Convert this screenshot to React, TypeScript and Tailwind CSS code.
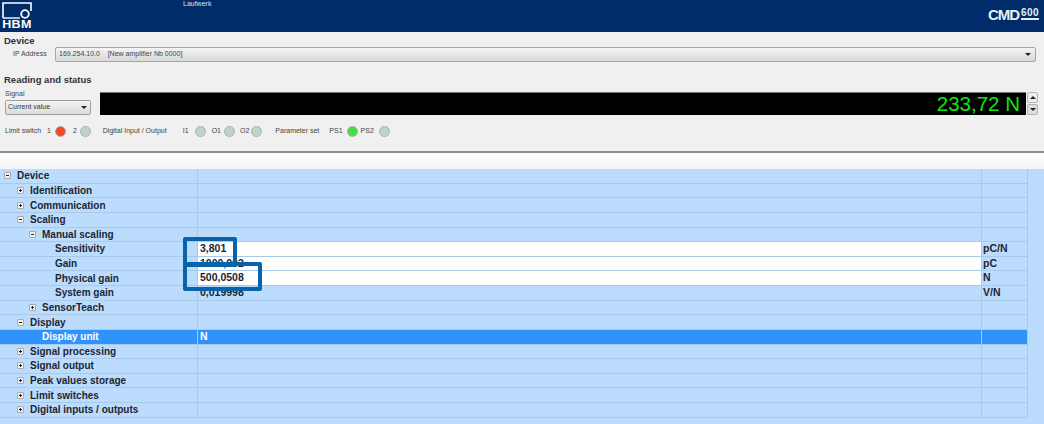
import React from "react";

const rows: { label: string; depth: number; icon?: "plus" | "minus"; value?: string; unit?: string; white?: boolean; selected?: boolean }[] = [
  { label: "Device", depth: 0, icon: "minus" },
  { label: "Identification", depth: 1, icon: "plus" },
  { label: "Communication", depth: 1, icon: "plus" },
  { label: "Scaling", depth: 1, icon: "minus" },
  { label: "Manual scaling", depth: 2, icon: "minus" },
  { label: "Sensitivity", depth: 3, value: "3,801", unit: "pC/N", white: true },
  { label: "Gain", depth: 3, value: "1000,002", unit: "pC", white: true },
  { label: "Physical gain", depth: 3, value: "500,0508", unit: "N", white: true },
  { label: "System gain", depth: 3, value: "0,019998", unit: "V/N" },
  { label: "SensorTeach", depth: 2, icon: "plus" },
  { label: "Display", depth: 1, icon: "minus" },
  { label: "Display unit", depth: 4, value: "N", selected: true },
  { label: "Signal processing", depth: 1, icon: "plus" },
  { label: "Signal output", depth: 1, icon: "plus" },
  { label: "Peak values storage", depth: 1, icon: "plus" },
  { label: "Limit switches", depth: 1, icon: "plus" },
  { label: "Digital inputs / outputs", depth: 1, icon: "plus" },
];

const indent = ["w-[4px]", "w-[17px]", "w-[29px]", "w-[55px]", "w-[42px]"];

const Expander = ({ type }: { type: "plus" | "minus" }) => (
  <span className="relative mr-[6px] h-[7px] w-[7px] shrink-0 rounded-[1px] border border-[#a9a9a9] bg-[#f2f2f2]">
    <span className="absolute left-[1px] top-[2px] h-px w-[3px] bg-[#222]" />
    {type === "plus" && <span className="absolute left-[2px] top-[1px] h-[3px] w-px bg-[#222]" />}
  </span>
);

const Led = ({ color }: { color: string }) => (
  <span className={`h-[11px] w-[11px] rounded-full border border-[#a8b4b2] ${color}`} />
);

const Logo = () => (
  <div className="flex w-[30px] flex-col">
    <svg width="30" height="17" viewBox="0 0 30 17">
      <path d="M1 16 V1 H29 V9" fill="none" stroke="#fff" strokeWidth="1.6" />
      <path d="M1 16 H18" fill="none" stroke="#fff" strokeWidth="1.4" />
      <circle cx="23" cy="12" r="3.8" fill="none" stroke="#fff" strokeWidth="1.8" />
    </svg>
    <span className="mt-[2px] text-center text-[10px] font-black leading-[8px] tracking-[0.3px] text-white [transform:scaleX(1.25)]">HBM</span>
  </div>
);

export default function App() {
  return (
    <div className="relative h-[424px] w-[1044px] overflow-hidden bg-[#bcdcfe] font-['Liberation_Sans',Arial,sans-serif] text-[#222]">
      <header className="flex h-[32px] items-start justify-between bg-[#012c69] pl-[2px] pr-[5px] pt-[2px]">
        <Logo />
        <span className="absolute left-[183px] top-0 text-[7px] leading-[8px] text-[#d7e0ee]">Laufwerk</span>
        <div className="mt-[5px] flex items-start font-bold leading-none text-[#e8eef5]">
          <span className="text-[15px] tracking-[-1px]">CMD</span>
          <span className="ml-[2px] border-b-2 border-[#e8eef5] text-[10px] leading-[11px] tracking-[0.4px]">600</span>
        </div>
      </header>

      <section className="h-[121px] border-b-2 border-[#8e8e8e] bg-[#f0f0f0] px-[4px] pt-[3px]">
        <h2 className="text-[9.5px] font-bold leading-[12px] text-[#333]">Device</h2>
        <div className="flex items-center">
          <span className="ml-[9px] w-[42px] text-[7px] text-[#444]">IP Address</span>
          <div className="flex h-[15px] w-[981px] items-center justify-between rounded-[2px] border border-[#a6a6a6] bg-gradient-to-b from-[#f4f4f4] to-[#d8d8d8] pl-[3px] pr-[4px] text-[7px] text-[#444]">
            <span className="whitespace-pre">169.254.10.0    [New amplifier Nb 0000]</span>
            <span className="h-0 w-0 border-x-[3px] border-t-[3px] border-x-transparent border-t-[#222]" />
          </div>
        </div>

        <h2 className="mt-[12px] text-[9.5px] font-bold leading-[12px] text-[#333]">Reading and status</h2>
        <div className="mt-[3px] flex items-end">
          <div className="ml-[1px] w-[86px]">
            <div className="text-[7px] leading-[10px] text-[#444]">Signal</div>
            <div className="mt-[1px] flex h-[15px] items-center justify-between rounded-[2px] border border-[#9e9e9e] bg-gradient-to-b from-[#f4f4f4] to-[#dcdcdc] pl-[2px] pr-[3px] text-[7px] text-[#333]">
              Current value
              <span className="h-0 w-0 border-x-[3px] border-t-[3px] border-x-transparent border-t-[#222]" />
            </div>
          </div>
          <div className="ml-[9px] flex h-[23px] w-[926px] items-center justify-end border-t border-[#777] bg-black pr-[6px] text-[20.5px] leading-none text-[#0fe60f]">233,72 N</div>
          <div className="ml-[1px] flex flex-col gap-px">
            <span className="flex h-[11px] w-[11px] items-center justify-center rounded-[2px] border border-[#b5b5b5] bg-[#ececec]"><span className="h-0 w-0 border-x-[3px] border-b-[3px] border-x-transparent border-b-[#222]" /></span>
            <span className="flex h-[11px] w-[11px] items-center justify-center rounded-[2px] border border-[#b5b5b5] bg-[#dedede]"><span className="h-0 w-0 border-x-[3px] border-t-[3px] border-x-transparent border-t-[#222]" /></span>
          </div>
        </div>
        <div className="mt-[10px] flex h-[12px] items-center text-[7px] text-[#444]">
          <span className="ml-[1px] w-[42px]">Limit switch</span>
          <span className="mr-[4px]">1</span>
          <Led color="bg-[#f3491c]" />
          <span className="ml-[7px] mr-[3px]">2</span>
          <Led color="bg-[#bfd2ce]" />
          <span className="ml-[12px] w-[72px]">Digital Input / Output</span>
          <span className="ml-[8px] mr-[6px]">I1</span>
          <Led color="bg-[#bfd2ce]" />
          <span className="ml-[6px] mr-[3px]">O1</span>
          <Led color="bg-[#bfd2ce]" />
          <span className="ml-[5px] mr-[2px]">O2</span>
          <Led color="bg-[#bfd2ce]" />
          <span className="ml-[13px] w-[53px]">Parameter set</span>
          <span className="ml-[1px] mr-[4px]">PS1</span>
          <Led color="bg-[#3fe03f]" />
          <span className="ml-[3px] mr-[5px]">PS2</span>
          <Led color="bg-[#bfd2ce]" />
        </div>
      </section>

      <div className="h-[16px] bg-gradient-to-b from-white to-[#f4f4f4]" />

      <div className="relative w-[1028px]">
        {rows.map((row) => (
          <div
            key={row.label}
            className={`flex h-[14.625px] items-center border-b border-[#a9c9ea] text-[10px] font-bold ${row.selected ? "bg-[#2f93fb] text-white" : "text-[#1c2530]"}`}
          >
            <div className="flex w-[197px] shrink-0 items-center">
              <span className={`shrink-0 ${indent[row.depth]}`} />
              {row.icon && <Expander type={row.icon} />}
              <span className="whitespace-nowrap">{row.label}</span>
            </div>
            <div className={`flex h-full w-[784px] shrink-0 items-center border-l border-[#a9c9ea] pl-[2px] text-[10.5px] ${row.white ? "bg-white" : ""}`}>{row.value}</div>
            <div className="flex h-full w-[47px] items-center border-x border-[#a9c9ea] pl-[1px] text-[10.5px]">{row.unit}</div>
          </div>
        ))}
        <div className="absolute left-[183px] top-[68px] h-[30px] w-[54px] rounded-[2px] border-[4px] border-[#0863ad]" />
        <div className="absolute left-[183px] top-[93px] h-[29px] w-[79px] rounded-[2px] border-[4px] border-[#0863ad]" />
      </div>
    </div>
  );
}
